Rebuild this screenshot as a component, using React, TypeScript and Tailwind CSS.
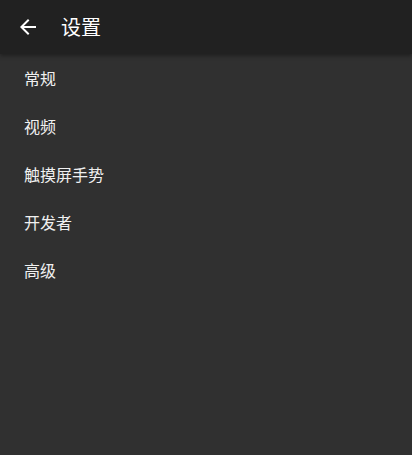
const items = ['常规', '视频', '触摸屏手势', '开发者', '高级'];

export default function App() {
  return (
    <div
      className="flex h-[455px] w-[412px] flex-col bg-[#303030] text-white"
      style={{ fontFamily: '"Noto Sans CJK SC", Roboto, sans-serif' }}
    >
      <header className="relative z-10 flex h-[54px] shrink-0 items-center bg-[#212121] shadow-[0_2px_4px_rgba(0,0,0,0.35)]">
        <button className="ml-[16px] flex h-[24px] w-[24px] items-center justify-center">
          <svg viewBox="0 0 24 24" className="h-[24px] w-[24px]" fill="currentColor">
            <path d="M20 11H7.83l5.59-5.59L12 4l-8 8 8 8 1.41-1.41L7.83 13H20v-2z" />
          </svg>
        </button>
        <h1 className="ml-[21px] text-[20px] leading-none font-normal">设置</h1>
      </header>
      <ul className="flex flex-col">
        {items.map((item) => (
          <li key={item} className="flex h-[48px] items-center px-[24px] text-[16px] text-[#f0f0f0]">
            {item}
          </li>
        ))}
      </ul>
    </div>
  );
}
